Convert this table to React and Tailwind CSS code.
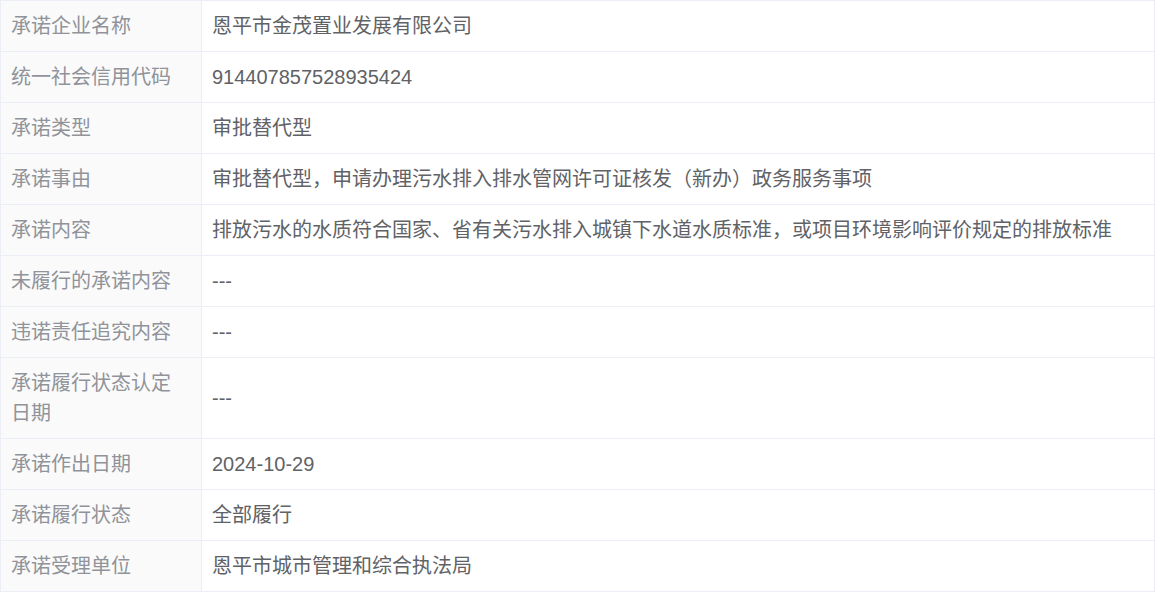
import React from 'react';

const rows = [
  ['承诺企业名称', '恩平市金茂置业发展有限公司'],
  ['统一社会信用代码', '914407857528935424'],
  ['承诺类型', '审批替代型'],
  ['承诺事由', '审批替代型，申请办理污水排入排水管网许可证核发（新办）政务服务事项'],
  ['承诺内容', '排放污水的水质符合国家、省有关污水排入城镇下水道水质标准，或项目环境影响评价规定的排放标准'],
  ['未履行的承诺内容', '---'],
  ['违诺责任追究内容', '---'],
  ['承诺履行状态认定日期', '---'],
  ['承诺作出日期', '2024-10-29'],
  ['承诺履行状态', '全部履行'],
  ['承诺受理单位', '恩平市城市管理和综合执法局'],
];

function App() {
  return (
    <div className="min-h-screen bg-white" style={{ fontFamily: '"Liberation Sans", "Noto Sans CJK SC", sans-serif' }}>
      <table className="w-full border-collapse text-[20px] leading-[30px]">
        <tbody>
          {rows.map(([label, value]) => (
            <tr key={label}>
              <td className="w-[201px] border border-[#ebeef5] bg-[#fafafa] pl-[10px] pr-[12px] py-[10px] align-middle text-[#909399]">
                {label}
              </td>
              <td className="border border-[#ebeef5] pl-[10px] pr-[12px] py-[10px] align-middle text-[#606266]">
                {value}
              </td>
            </tr>
          ))}
        </tbody>
      </table>
    </div>
  );
}

export default App;
